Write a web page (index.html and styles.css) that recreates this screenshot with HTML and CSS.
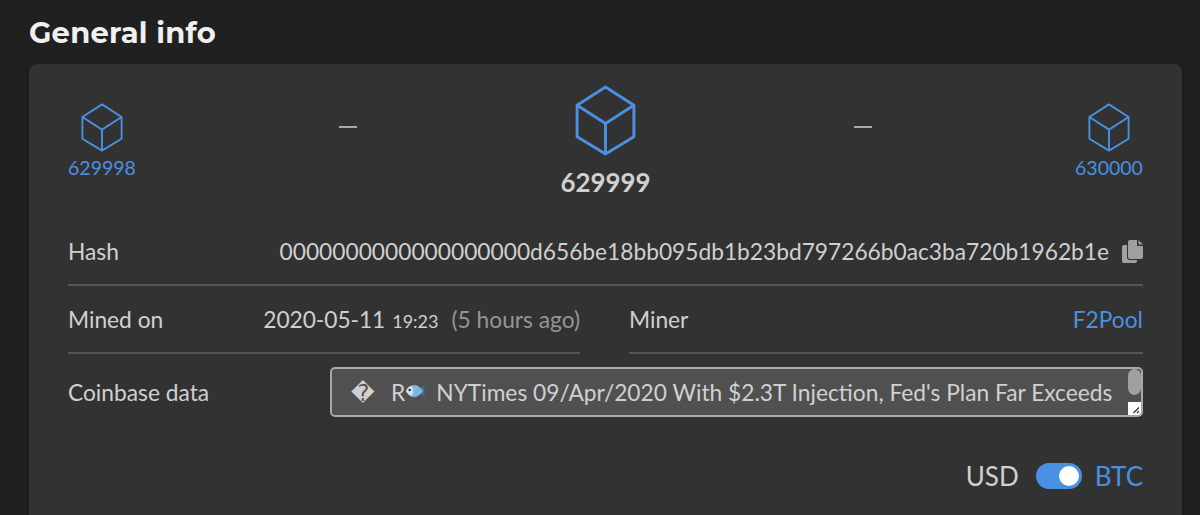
FILE: index.html
```html
<!DOCTYPE html>
<html lang="en">
<head>
  <meta charset="UTF-8">
  <meta name="viewport" content="width=device-width, initial-scale=1.0">
  <title>Block 629999</title>
  <link rel="stylesheet" href="styles.css">
</head>
<body>

  <h1>General info</h1>

  <div class="card">
    <div class="blocks">
      <a class="block" href="#">
        <svg class="cube" viewBox="0 0 60 70"><path d="M30 2 58 20V51L30 68 2 51V20ZM2 20 30 38 58 20M30 38V68"/></svg>
        <span>629998</span>
      </a>
      <span class="dash"></span>
      <div class="block current">
        <svg class="cube" viewBox="0 0 60 70"><path d="M30 2 58 20V51L30 68 2 51V20ZM2 20 30 38 58 20M30 38V68"/></svg>
        <span>629999</span>
      </div>
      <span class="dash"></span>
      <a class="block" href="#">
        <svg class="cube" viewBox="0 0 60 70"><path d="M30 2 58 20V51L30 68 2 51V20ZM2 20 30 38 58 20M30 38V68"/></svg>
        <span>630000</span>
      </a>
    </div>

    <div class="row">
      <span class="label">Hash</span>
      <span class="value">
        <span class="hash">0000000000000000000d656be18bb095db1b23bd797266b0ac3ba720b1962b1e</span>
        <svg class="copy" viewBox="0 0 21 23"><path d="M5 5H2Q0 5 0 7V21Q0 23 2 23H13Q15 23 15 21V20H8Q5 20 5 17Z"/><path d="M8 0H15V6H21V17Q21 19 19 19H8Q6 19 6 17V2Q6 0 8 0Z"/><path d="M16.5 0 21 4.5H16.5Z"/></svg>
      </span>
    </div>

    <div class="columns">
      <div class="row">
        <span class="label">Mined on</span>
        <span class="value"><span class="date">2020-05-11</span><span class="time">19:23</span><span class="ago">(5 hours ago)</span></span>
      </div>
      <div class="row">
        <span class="label">Miner</span>
        <a class="miner" href="#">F2Pool</a>
      </div>
    </div>

    <div class="coinbase">
      <span class="label">Coinbase data</span>
      <div class="box">
        <span class="unknown">&#xFFFD;</span>
        <span>R</span>
        <svg class="fish" viewBox="0 0 20 14"><path fill="#426f9f" d="M13 5 19 1Q17 6 19 12L13 9Z"/><path fill="#426f9f" d="M5 2Q8-1 12 3ZM7 12 10 14 12 11Z"/><path fill="#80b5df" d="M0 7Q3 1 9 1 14 2 17 7 13 13 7 13 2 12 0 7Z"/><path fill="#d0e5f3" d="M0 7Q2 2 6 2 8 7 6 12 2 11 0 7Z"/><circle cx="3.7" cy="6" r="1.2" fill="#222"/></svg>
        <span class="message">NYTimes 09/Apr/2020 With $2.3T Injection, Fed's Plan Far Exceeds</span>
        <span class="thumb"></span>
        <svg class="grip" viewBox="0 0 13 13"><path d="M5.5 11 11 5.5M9 11 11 9"/></svg>
      </div>
    </div>

    <div class="currency">
      <span class="usd">USD</span>
      <span class="switch"></span>
      <span class="btc">BTC</span>
    </div>
  </div>

</body>
</html>
```

FILE: styles.css
```css
* {
  box-sizing: border-box;
}
body {
  margin: 0;
  height: 515px;
  overflow: hidden;
  background-color: #202020;
  color: #d0d0d0;
  font-family: Lato, 'Liberation Sans', sans-serif;
  font-size: 22.75px;
}
a {
  color: #4a90e2;
  text-decoration: none;
}
h1 {
  margin: 0;
  height: 64px;
  padding-left: 29px;
  font-family: Montserrat, Inter, sans-serif;
  font-size: 29px;
  font-weight: 700;
  line-height: 65px;
  letter-spacing: 0.25px;
  color: #f0f0f0;
}
.card {
  width: 1153px;
  height: 470px;
  margin-left: 29px;
  padding: 0 39px;
  border-radius: 8px;
  background-color: #323232;
  box-shadow: 0 0 8px rgba(0, 0, 0, 0.2);
}
.blocks {
  display: flex;
  justify-content: space-between;
  height: 154px;
}
.block {
  display: flex;
  flex-direction: column;
  align-items: center;
  width: 68px;
  padding-top: 39px;
  font-size: 19.5px;
  line-height: 24px;
}
.cube {
  width: 42px;
  height: 49px;
  margin: 0 1px 4px 0;
  fill: none;
  stroke: #4a90e2;
  stroke-width: 2.7;
  stroke-linejoin: round;
}
.current {
  width: 90px;
  padding-top: 21px;
  font-size: 25.9px;
  font-weight: 700;
  line-height: 32px;
}
.current .cube {
  width: 61px;
  height: 71px;
  margin-bottom: 10px;
  stroke-width: 2.9;
}
.dash {
  width: 18px;
  height: 2px;
  margin-top: 62px;
  background-color: #a8a8a8;
}
.row {
  display: flex;
  justify-content: space-between;
  align-items: center;
  height: 68px;
  padding-top: 1px;
  border-bottom: 2px solid #555;
}
.value {
  display: flex;
  align-items: baseline;
}
.hash {
  letter-spacing: -0.01px;
}
.copy {
  width: 21px;
  height: 23px;
  margin-left: 13px;
  align-self: center;
  fill: #a0a0a0;
}
.columns {
  display: grid;
  grid-template-columns: 512px 514px;
  justify-content: space-between;
}
.date {
  letter-spacing: -0.05px;
}
.time {
  margin-left: 7px;
  font-size: 18px;
}
.ago {
  margin-left: 13px;
  color: #959595;
}
.coinbase {
  display: flex;
  justify-content: space-between;
  align-items: center;
  height: 50px;
  margin-top: 13px;
}
.label {
  padding-top: 1px;
}
.row .label {
  padding-top: 0;
}
.box {
  position: relative;
  display: flex;
  align-items: center;
  width: 813px;
  height: 50px;
  padding: 1px 0 0 19px;
  border: 2px solid #a8a8a8;
  border-radius: 5px;
  background-color: #505050;
  white-space: nowrap;
}
.unknown {
  width: 40px;
  font-family: 'DejaVu Sans', sans-serif;
  font-size: 23px;
}
.fish {
  width: 20px;
  height: 14px;
  margin: -3px 10px 0 1px;
}
.thumb {
  position: absolute;
  top: 0;
  right: 0;
  width: 13px;
  height: 26px;
  border-radius: 7px;
  background-color: #a0a0a0;
}
.grip {
  position: absolute;
  right: 0;
  bottom: 0;
  width: 13px;
  height: 13px;
  border-bottom-right-radius: 3px;
  background-color: #fff;
  fill: none;
  stroke: #333;
  stroke-width: 1.2;
}
.currency {
  display: flex;
  justify-content: flex-end;
  align-items: center;
  height: 34px;
  margin-top: 42px;
  font-size: 26px;
}
.switch {
  width: 46px;
  height: 26px;
  margin: 0 13px 0 17px;
  padding: 3px;
  border-radius: 13px;
  background-color: #4a90e2;
}
.switch::after {
  content: '';
  display: block;
  width: 20px;
  height: 20px;
  margin-left: auto;
  border-radius: 50%;
  background-color: #fff;
}
.btc {
  color: #4a90e2;
}
```
